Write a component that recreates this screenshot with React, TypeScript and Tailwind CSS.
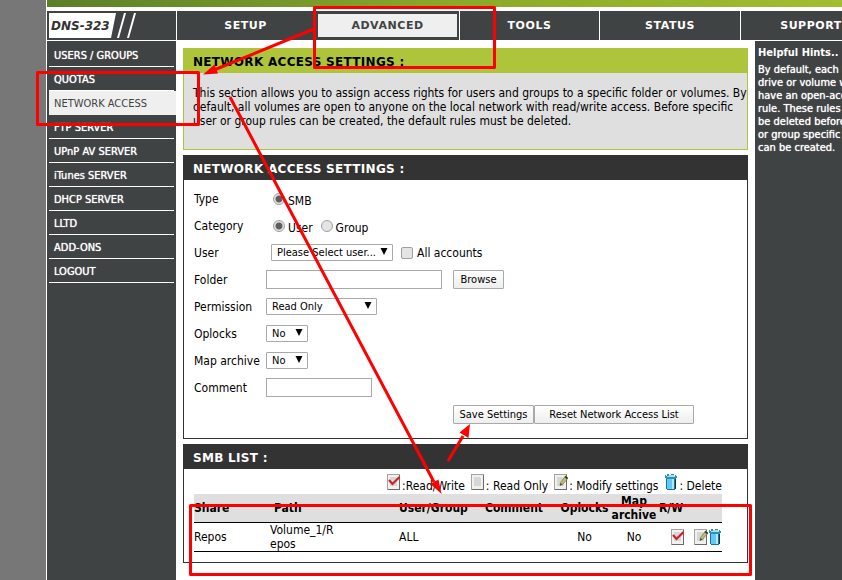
import type { ReactNode } from "react";

const NAV = [
  { label: "SETUP", cell: "w-[138px]" },
  { label: "ADVANCED", cell: "w-[145px]", active: true },
  { label: "TOOLS", cell: "w-[140px]" },
  { label: "STATUS", cell: "w-[141px]" },
  { label: "SUPPORT", cell: "w-[141px]" },
];

const SIDE = [
  "USERS / GROUPS",
  "QUOTAS",
  "NETWORK ACCESS",
  "FTP SERVER",
  "UPnP AV SERVER",
  "iTunes SERVER",
  "DHCP SERVER",
  "LLTD",
  "ADD-ONS",
  "LOGOUT",
];

const HINTS = [
  "By default, each hard",
  "drive or volume will",
  "have an open-access",
  "rule. These rules",
  "be deleted before",
  "or group specific",
  "can be created.",
];

const VERDANA = "font-['DejaVu_Sans',Verdana,sans-serif] font-bold";

function SheetIcon({ children }: { children?: ReactNode }) {
  return (
    <svg width="14" height="16" viewBox="0 0 14 16" className="block shrink-0" shapeRendering="crispEdges" aria-hidden="true">
      <path d="M0 0h13v16H0z" fill="#a3a3a3" />
      <path d="M1 1h11v14H1z" fill="#f0f0ec" />
      <path d="M3 3h6v1h1v8H3z" fill="#d6d6d6" />
      <path d="M12 1h1v15H1v-1h11z" fill="#6a6a6a" />
      {children}
    </svg>
  );
}

function CheckIcon() {
  return (
    <SheetIcon>
      <path d="M2 6l3.500 4L12.500 3" fill="none" stroke="#cf1f2b" strokeWidth="2.2" shapeRendering="auto" />
    </SheetIcon>
  );
}

function EditIcon() {
  return (
    <SheetIcon>
      <g shapeRendering="auto">
        <path d="M11.500 2l2.500 2-5 6-3 1.500 0.500-3z" fill="#bdbb74" stroke="#77764a" strokeWidth="0.7" />
        <path d="M6 11.500l0.500-2.500 2 1.500z" fill="#444" />
        <path d="M11.500 2l2.500 2-1 1.200-2.500-2z" fill="#333" />
      </g>
    </SheetIcon>
  );
}

function TrashIcon() {
  return (
    <svg width="14" height="16" viewBox="0 0 14 16" className="block shrink-0" shapeRendering="crispEdges" aria-hidden="true">
      <path d="M2 4h10v11h-1v1H3v-1H2z" fill="#0c7a98" />
      <path d="M3 4h5v11H3z" fill="#62c6f8" />
      <path d="M8 4h2v11H8z" fill="#b5e8fc" />
      <path d="M11 4h1v11h-1z" fill="#17343f" />
      <path d="M1 2h12v2h-1v1H2V4H1z" fill="#2a93b2" />
      <path d="M3 0h2v1h1v1H3zM7 0h3v1H7zM11 1h1v1h-1zM1 1h1v1H1z" fill="#45869a" />
      <path d="M3 2h8v1H3zM5 1h5v1H5z" fill="#9fe0fa" />
    </svg>
  );
}

function Legend({ icon, text }: { icon: ReactNode; text: string }) {
  return (
    <span className="flex items-center gap-px">
      {icon}
      <span className="pt-2 leading-4">{text}</span>
    </span>
  );
}

function Panel({ title, children }: { title: string; children: ReactNode }) {
  return (
    <section className="border border-[#333333] bg-white">
      <h2 className={`h-6 bg-[#333333] pl-[9px] text-xs leading-[26px] tracking-wide text-white ${VERDANA}`}>{title}</h2>
      {children}
    </section>
  );
}

function Row({ label, id, children }: { label: string; id: string; children: ReactNode }) {
  return (
    <div className="flex h-[27px] items-center">
      <label htmlFor={id} className="w-[72px] shrink-0">{label}</label>
      {children}
    </div>
  );
}

function Radio({ id, name, label, checked }: { id: string; name: string; label: string; checked?: boolean }) {
  return (
    <span className="flex items-center gap-[3px]">
      <input
        id={id}
        type="radio"
        name={name}
        defaultChecked={checked}
        className="size-3 appearance-none rounded-full border border-[#a0a0a0] bg-[#e4e4e4] checked:bg-[radial-gradient(circle,#5f5f5f_0_3px,#e4e4e4_4px)]"
      />
      <label htmlFor={id} className="pt-1">{label}</label>
    </span>
  );
}

function Select({ id, value, width }: { id: string; value: string; width: string }) {
  return (
    <span className={`relative flex ${width}`}>
      <select id={id} className="h-[17px] w-full appearance-none rounded-[1px] border border-[#a9a9a9] bg-white pl-[5px] text-[11px] leading-[15px]">
        <option>{value}</option>
      </select>
      <svg width="8" height="7" viewBox="0 0 8 7" className="pointer-events-none absolute top-1 right-[5px]" aria-hidden="true">
        <path d="M0.5 0h7L4 7z" fill="#000" />
      </svg>
    </span>
  );
}

const BUTTON =
  "h-[19px] rounded-[1px] border border-[#a9a9a9] bg-linear-to-b from-white to-[#eeeeee] text-[11px] leading-4 whitespace-nowrap";
const INPUT = "h-[19px] border border-[#a9a9a9] bg-white px-1 text-[11px]";

export default function App() {
  return (
    <div className="relative flex h-screen overflow-hidden bg-[#777777] pl-[46px] font-['DejaVu_Sans_Condensed','DejaVu_Sans',Tahoma,sans-serif] text-xs text-black">
      <div className="flex min-w-0 flex-1 flex-col border-l border-white bg-white">
        <div className="h-[7px] shrink-0 bg-linear-to-r from-[#5b7f28] via-[#8aa82a] to-[#a3bd30]" />
        <header className="mt-1 flex h-[29px] shrink-0 overflow-hidden bg-[#404343]">
          <div className="w-[129px] shrink-0 py-0.5 pl-0.5">
            <div className="flex h-[25px]">
              <span className="flex items-center bg-white pl-0.5 font-['DejaVu_Sans',Verdana,sans-serif] text-xs font-bold text-[#333333] italic">DNS-323</span>
              <svg width="28" height="25" viewBox="0 0 28 25" className="-ml-px" aria-hidden="true">
                <path d="M0 0h7L2 25H0zM15 0h2L10 25H8zM25 0h2l-7 25h-2z" fill="#fff" />
              </svg>
            </div>
          </div>
          <nav className="flex shrink-0">
            {NAV.map((n) => (
              <a
                key={n.label}
                href="#"
                className={`flex shrink-0 border-l border-white text-[11px] tracking-wider ${VERDANA} ${n.cell} ${n.active ? "p-[3px] pr-0.5 text-[#404343]" : "text-white"}`}
              >
                <span className={`flex flex-1 items-center justify-center pt-0.5 ${n.active ? "bg-[#efefef]" : ""}`}>{n.label}</span>
              </a>
            ))}
          </nav>
        </header>
        <div className="mt-px flex min-h-0 flex-1">
          <aside className="w-[129px] shrink-0 bg-[#404343] pt-0.5 pl-0.5">
            {SIDE.map((s) => (
              <a
                key={s}
                href="#"
                className={`block h-6 border-b pl-[5px] text-[11px] leading-[25px] ${
                  s === "NETWORK ACCESS"
                    ? "border-[#efefef] bg-[#efefef] text-[#404343]"
                    : "mr-0.5 border-white text-white [text-shadow:0_0_1px_#ffffff]"
                }`}
              >
                {s}
              </a>
            ))}
          </aside>
          <main className="flex min-w-0 flex-1 flex-col gap-[5px] px-[7px] pt-[7px]">
            <section className="border border-[#aec53b] bg-[#dfdfdf]">
              <h1 className={`h-6 bg-[#aec53b] pl-[9px] text-xs leading-[26px] tracking-wide ${VERDANA}`}>NETWORK ACCESS SETTINGS :</h1>
              <p className="h-[76px] pt-[13px] pl-[9px] leading-[14px] whitespace-nowrap">
                This section allows you to assign access rights for users and groups to a specific folder or volumes. By
                <br />
                default, all volumes are open to anyone on the local network with read/write access. Before specific
                <br />
                user or group rules can be created, the default rules must be deleted.
              </p>
            </section>
            <Panel title="NETWORK ACCESS SETTINGS :">
              <form className="h-[258px] pt-[5px] pl-[10px]">
                <Row label="Type" id="smb">
                  <span className="pl-[7px]"><Radio id="smb" name="type" label="SMB" checked /></span>
                </Row>
                <Row label="Category" id="cat-user">
                  <span className="flex gap-2 pl-[7px]">
                    <Radio id="cat-user" name="category" label="User" checked />
                    <Radio id="cat-group" name="category" label="Group" />
                  </span>
                </Row>
                <Row label="User" id="user">
                  <span className="flex items-center pl-[5px]">
                    <Select id="user" value="Please Select user..." width="w-[122px]" />
                    <input id="all" type="checkbox" className="mr-1 ml-2 size-3 appearance-none rounded-[2px] border border-[#a0a0a0] bg-[#e4e4e4]" />
                    <label htmlFor="all">All accounts</label>
                  </span>
                </Row>
                <Row label="Folder" id="folder">
                  <input id="folder" type="text" className={`w-44 ${INPUT}`} />
                  <button type="button" className={`ml-[11px] w-[51px] ${BUTTON}`}>Browse</button>
                </Row>
                <Row label="Permission" id="permission"><Select id="permission" value="Read Only" width="w-[111px]" /></Row>
                <Row label="Oplocks" id="oplocks"><Select id="oplocks" value="No" width="w-[42px]" /></Row>
                <Row label="Map archive" id="archive"><Select id="archive" value="No" width="w-[42px]" /></Row>
                <Row label="Comment" id="comment">
                  <input id="comment" type="text" className={`w-[106px] ${INPUT}`} />
                </Row>
                <div className="flex h-[27px] items-center pl-[259px]">
                  <button type="button" className={`w-[81px] ${BUTTON}`}>Save Settings</button>
                  <button type="button" className={`w-40 ${BUTTON}`}>Reset Network Access List</button>
                </div>
              </form>
            </Panel>
            <Panel title="SMB LIST :">
              <div className="pr-[25px] pb-[10px] pl-[10px]">
                <div className="flex h-[25px] items-end justify-end gap-1.5 whitespace-nowrap">
                  <Legend icon={<CheckIcon />} text=":Read/Write" />
                  <Legend icon={<SheetIcon />} text=": Read Only" />
                  <Legend icon={<EditIcon />} text=": Modify settings" />
                  <Legend icon={<TrashIcon />} text=": Delete" />
                </div>
                <table className="w-full table-fixed border-collapse leading-[14px]">
                  <colgroup>
                    <col className="w-[76px]" />
                    <col className="w-[129px]" />
                    <col className="w-[86px]" />
                    <col className="w-[73px]" />
                    <col className="w-[53px]" />
                    <col className="w-[46px]" />
                    <col />
                  </colgroup>
                  <thead>
                    <tr className="h-7 border-b border-black bg-[#dfdfdf] text-left">
                      <th className="p-0">Share</th>
                      <th className="pl-1">Path</th>
                      <th className="p-0">User/Group</th>
                      <th className="p-0">Comment</th>
                      <th className="p-0 text-center">Oplocks</th>
                      <th className="p-0 text-center">Map archive</th>
                      <th className="pl-0.5">R/W</th>
                    </tr>
                  </thead>
                  <tbody>
                    <tr className="h-7 border-b border-black">
                      <td>Repos</td>
                      <td>Volume_1/R<br />epos</td>
                      <td>ALL</td>
                      <td />
                      <td className="text-center">No</td>
                      <td className="text-center">No</td>
                      <td>
                        <div className="flex items-center justify-end">
                          <span className="mr-[9px]"><CheckIcon /></span>
                          <button type="button" aria-label="Modify"><EditIcon /></button>
                          <button type="button" aria-label="Delete"><TrashIcon /></button>
                        </div>
                      </td>
                    </tr>
                  </tbody>
                </table>
              </div>
            </Panel>
          </main>
          <aside className="w-[87px] shrink-0 overflow-hidden bg-[#404343] pt-1 pl-[3px] whitespace-nowrap text-white">
            <h2 className="text-[11px] leading-[15px] font-bold">Helpful Hints..</h2>
            <p className="pt-[3px] text-[11px] leading-[13px] [text-shadow:0_0_1px_#ffffff]">
              {HINTS.map((h) => (
                <span key={h} className="block">{h}</span>
              ))}
            </p>
          </aside>
        </div>
      </div>
      <svg className="pointer-events-none absolute top-0 left-0" width="842" height="580" viewBox="0 0 842 580" fill="none" stroke="#ff0000" strokeWidth="3" strokeLinejoin="round" aria-hidden="true">
        <path d="M314.5 7.5h180v60h-180zM37.500 72.500h161v52h-161zM190.500 505.500h560v69h-560z" />
        <path d="M314 29L214 70M230 97L434 482M448 461L463 436" />
        <path d="M203 74.500L214.500 64.500L218 73.500zM441.500 494L430.500 484L438.500 479.500zM470 424L459.500 432.500L468.500 438z" fill="#ff0000" stroke="none" />
      </svg>
    </div>
  );
}
